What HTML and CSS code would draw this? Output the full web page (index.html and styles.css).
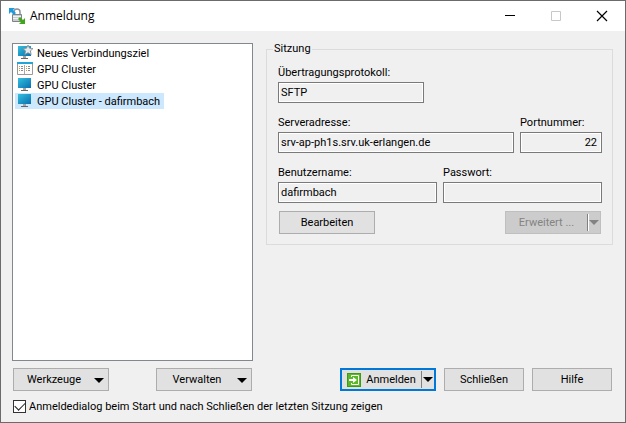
FILE: index.html
```html
<!DOCTYPE html>
<html lang="de">
<head>
<meta charset="utf-8">
<meta name="viewport" content="width=device-width, initial-scale=1">
<title>Anmeldung</title>
<link rel="stylesheet" href="styles.css">
</head>
<body>
<svg class="defs" aria-hidden="true">
  <defs>
    <linearGradient id="screen" x1="0" y1="0" x2="1" y2="1">
      <stop offset="0" stop-color="#35c0de"/>
      <stop offset="1" stop-color="#0870b0"/>
    </linearGradient>
    <symbol id="monitor" viewBox="0 0 16 16">
      <path d="M1 1h13v10H1z" fill="url(#screen)"/>
      <path d="M6 11h3v2H6z" fill="#a4a4a4"/>
      <path d="M4 13h7v1H4z" fill="#666"/>
    </symbol>
    <symbol id="arrow" viewBox="0 0 10 5"><path d="M0 0h10L5 5z" fill="currentColor"/></symbol>
  </defs>
</svg>
<main class="window">
  <header class="titlebar">
    <svg class="icon" viewBox="0 0 16 16" aria-hidden="true">
      <path d="M5 7V4a3 3 0 0 1 6 0v3" fill="none" stroke="#8b9299" stroke-width="1.500"/>
      <path d="M3.500 6.500h9v7h-9z" fill="#c9cdd0" stroke="#7d8389"/>
      <path d="M4 8.500h8M4 10.500h8" stroke="#eef0f1"/>
      <path d="M0 0h6L4 2l3 3-2 2-3-3-2 2z" fill="#1d9bdc"/>
      <path d="M16 16h-6l2-2-3-3 2-2 3 3 2-2z" fill="#43a51c"/>
    </svg>
    <h1 class="title">Anmeldung</h1>
    <button class="caption" type="button" aria-label="Minimieren"><svg viewBox="0 0 10 10"><path d="M0 4.500h10" stroke="#000"/></svg></button>
    <button class="caption" type="button" aria-label="Maximieren" disabled><svg viewBox="0 0 10 10"><path d="M.5.5h9v9h-9z" fill="none" stroke="#c8c8c8"/></svg></button>
    <button class="caption" type="button" aria-label="Fenster schließen"><svg viewBox="0 0 10 10"><path d="M0 0l10 10M10 0L0 10" stroke="#000" stroke-width="1.200"/></svg></button>
  </header>
  <form class="content">
    <div class="panes">
      <ul class="sites">
        <li class="site">
          <svg class="icon" viewBox="0 0 16 16" aria-hidden="true">
            <use href="#monitor"/>
            <path d="M11 0l1.500 3.200 3.500.4-2.600 2.300.8 3.600L11 7.700 7.800 9.500l.8-3.600L6 3.600l3.500-.4z" fill="#e6e9eb" stroke="#848c92" stroke-width=".8"/>
          </svg>
          <span class="name">Neues Verbindungsziel</span>
        </li>
        <li class="site">
          <svg class="icon" viewBox="0 0 16 16" aria-hidden="true">
            <path d="M.5 2.500h15v11H.5z" fill="#fff" stroke="#999"/>
            <path d="M0 1h16v2H0z" fill="#25a5d5"/>
            <path d="M7.500 4v9" stroke="#aaa"/>
            <path d="M2 5.500h1M2 7.500h1M2 9.500h1M9 5.500h1M9 7.500h1M9 9.500h1" stroke="#d09a35"/>
            <path d="M4 5.500h2M4 7.500h2M4 9.500h2M11 5.500h2M11 7.500h2M11 9.500h2" stroke="#8a8a8a"/>
          </svg>
          <span class="name">GPU Cluster</span>
        </li>
        <li class="site"><svg class="icon" aria-hidden="true"><use href="#monitor"/></svg><span class="name">GPU Cluster</span></li>
        <li class="site selected" aria-current="true"><svg class="icon" aria-hidden="true"><use href="#monitor"/></svg><span class="name">GPU Cluster - dafirmbach</span></li>
      </ul>
      <fieldset class="session">
        <legend>Sitzung</legend>
        <div class="row">
          <div class="field protocol"><label for="protocol">Übertragungsprotokoll:</label><input id="protocol" value="SFTP" readonly></div>
        </div>
        <div class="row server">
          <div class="field"><label for="host">Serveradresse:</label><input id="host" value="srv-ap-ph1s.srv.uk-erlangen.de" readonly></div>
          <div class="field"><label for="port">Portnummer:</label><input id="port" class="number" value="22" readonly></div>
        </div>
        <div class="row login">
          <div class="field"><label for="user">Benutzername:</label><input id="user" value="dafirmbach" readonly></div>
          <div class="field"><label for="password">Passwort:</label><input id="password" type="password" readonly></div>
        </div>
        <div class="actions">
          <button class="button wide" type="button">Bearbeiten</button>
          <div class="button wide split off">
            <button class="main" type="button" disabled>Erweitert ...</button>
            <button class="drop" type="button" aria-label="Erweitert: Menü" disabled><svg class="arrow"><use href="#arrow"/></svg></button>
          </div>
        </div>
      </fieldset>
    </div>
    <div class="panes footer">
      <div class="tools">
        <button class="button wide menu" type="button"><span class="text">Werkzeuge</span><svg class="arrow"><use href="#arrow"/></svg></button>
        <button class="button wide menu" type="button"><span class="text">Verwalten</span><svg class="arrow"><use href="#arrow"/></svg></button>
      </div>
      <div class="commands">
        <div class="button wide split default">
          <button class="main" type="button">
            <svg class="enter" viewBox="0 0 14 14" aria-hidden="true">
              <path d="M0 0h14v14H0z" fill="#3f9b12"/>
              <path d="M1 1h12v12H1z" fill="#5bb82a"/>
              <path d="M4.500 4V2.500h7v9h-7V10" fill="none" stroke="#fff"/>
              <path d="M2 6h4V4l4 3-4 3V8H2z" fill="#fff"/>
            </svg>
            <span>Anmelden</span>
          </button>
          <button class="drop" type="button" aria-label="Anmelden: Menü"><svg class="arrow"><use href="#arrow"/></svg></button>
        </div>
        <button class="button" type="button">Schließen</button>
        <button class="button" type="button">Hilfe</button>
      </div>
    </div>
    <label class="check"><input type="checkbox" checked><span>Anmeldedialog beim Start und nach Schließen der letzten Sitzung zeigen</span></label>
  </form>
</main>
</body>
</html>
```
FILE: styles.css
```css
* { box-sizing: border-box; }

body {
  margin: 0;
  color: #000;
  background: #f0f0f0;
  font: 11px/16px Tahoma, Roboto, sans-serif;
}

button, input {
  font: inherit;
  color: inherit;
  border-radius: 0;
}

.defs { position: absolute; width: 0; height: 0; }

.window {
  display: flex;
  flex-direction: column;
  min-height: 100vh;
  border: 1px solid #6b6b6b;
}

.titlebar {
  display: flex;
  align-items: center;
  height: 30px;
  padding-left: 8px;
  background: #fff;
}

.icon { flex: none; width: 16px; height: 16px; }

.title {
  flex: 1;
  margin: 0 0 0 5px;
  font: 12px/16px "Open Sans", "Segoe UI", sans-serif;
}

.caption {
  display: grid;
  place-items: center;
  width: 46px;
  height: 28px;
  padding: 0;
  border: 0;
  background: none;
}

.caption svg { width: 10px; height: 10px; overflow: visible; }

.content {
  flex: 1;
  display: flex;
  flex-direction: column;
  padding: 10px 12px 8px 11px;
}

.panes {
  flex: 1;
  display: grid;
  grid-template-columns: 241fr 347fr;
  column-gap: 13px;
}

.sites {
  margin: 2px 0 0;
  padding: 1px 2px;
  list-style: none;
  background: #fff;
  border: 1px solid #828790;
}

.site {
  display: flex;
  width: fit-content;
  height: 16px;
  padding: 0 4px 0 2px;
  gap: 4px;
}

.name { line-height: 18px; }

.selected { background: #cce8ff; }

.session {
  align-self: start;
  min-width: 0;
  margin: 0;
  padding: 7px 10px 10px 11px;
  border: 1px solid #dcdcdc;
}

.session legend {
  margin-left: -5px;
  padding: 0 1px;
}

.row { display: grid; column-gap: 6px; margin-bottom: 11px; }
.row.server { grid-template-columns: 236fr 82fr; }
.row.login { grid-template-columns: 1fr 1fr; margin-bottom: 8px; }
.protocol { width: 45%; }

.field { display: flex; flex-direction: column; min-width: 0; }

.field label { line-height: 18px; }

.field input {
  width: 100%;
  height: 21px;
  padding: 0 2px;
  background: #f0f0f0;
  border: 1px solid #7a7a7a;
  outline: 0;
  box-shadow: inset 0 0 0 1px #fff;
}

.field .number { padding-right: 4px; text-align: right; }

.actions { display: flex; justify-content: space-between; padding: 0 1px; }

.button {
  display: flex;
  align-items: center;
  justify-content: center;
  width: 80px;
  height: 23px;
  padding: 1px 0 0;
  background: #e1e1e1;
  border: 1px solid #adadad;
}

.wide { width: 96px; }

.arrow { flex: none; width: 10px; height: 5px; }

.menu { padding-right: 4px; }
.menu .text { flex: 1; text-align: center; }

.split { align-items: stretch; padding: 0; }

.split button {
  display: flex;
  align-items: center;
  justify-content: center;
  padding: 0;
  background: none;
  border: 0;
}

.split .main { flex: 1; gap: 5px; padding-top: 1px; }

.split .drop {
  width: 13px;
  margin: 2px 0;
  border-left: 1px solid #808080;
}

.off { color: #838383; background: #ccc; border-color: #bfbfbf; }
.off .drop { box-shadow: inset 1px 0 #fff; }

.default { border: 2px solid #0078d7; }
.default .drop { margin: 1px 0; }

.enter { width: 14px; height: 14px; }

.footer { flex: none; margin-top: 7px; }

.tools, .commands { display: flex; }
.tools { justify-content: space-between; padding: 0 1px; }
.commands { justify-content: flex-end; gap: 8px; padding-right: 1px; }

.check {
  display: flex;
  align-items: center;
  align-self: flex-start;
  gap: 3px;
  height: 16px;
  margin: 7px 0 0 1px;
  line-height: 18px;
}

.check input {
  appearance: none;
  display: grid;
  place-items: center;
  width: 13px;
  height: 13px;
  margin: 0;
  background: #fff;
  border: 1px solid #333;
}

.check span { padding-top: 2px; }

.check input:checked::before {
  content: "";
  width: 9px;
  height: 5px;
  margin-bottom: 3px;
  border: solid #222;
  border-width: 0 0 1px 1px;
  transform: rotate(-45deg);
}
```
